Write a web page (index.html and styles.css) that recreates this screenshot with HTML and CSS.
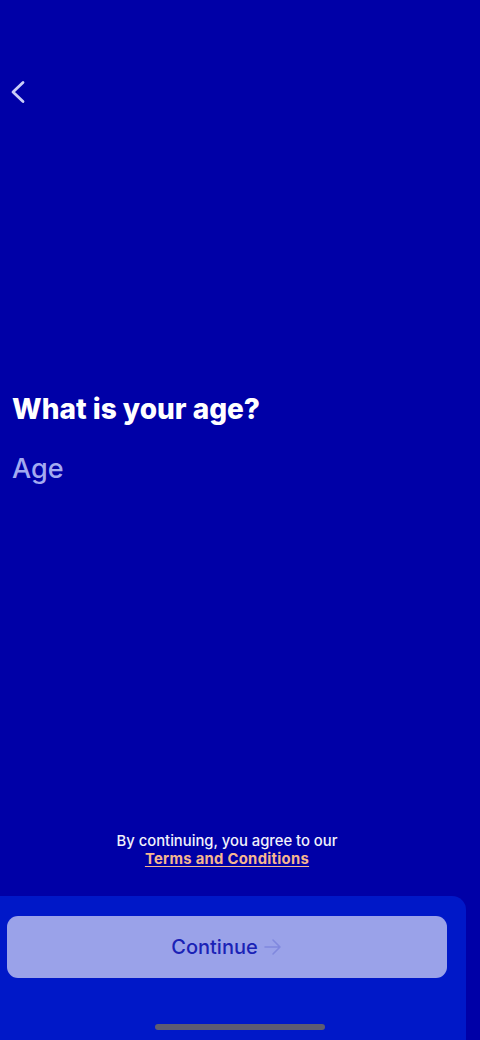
FILE: index.html
```html
<!DOCTYPE html>
<html lang="en">
<head>
<meta charset="utf-8">
<title>Age</title>
<link rel="stylesheet" href="styles.css">
</head>
<body>
<div class="screen">
  <div class="top">
    <button class="back" aria-label="Back">
      <svg width="18" height="24" viewBox="0 0 18 24"><path d="M14 2.5 L4 12 L14 21.5" fill="none" stroke="#c9cdf7" stroke-width="2.8" stroke-linecap="round" stroke-linejoin="round"/></svg>
    </button>
  </div>
  <div class="question">
    <h1 class="title">What is your age?</h1>
    <div class="placeholder">Age</div>
  </div>
  <div class="spacer"></div>
  <p class="terms">By continuing, you agree to our<br><a class="terms-link" href="#">Terms and Conditions</a></p>
  <div class="panel">
    <button class="continue">Continue <svg class="arrow" width="20" height="18" viewBox="0 0 20 18"><path d="M2 9 H17 M10 2 L17 9 L10 16" fill="none" stroke="#8088de" stroke-width="1.6" stroke-linecap="round" stroke-linejoin="round"/></svg></button>
  </div>
  <div class="home-indicator"></div>
</div>
</body>
</html>
```
FILE: styles.css
```css
* { box-sizing: border-box; }
html, body { margin: 0; padding: 0; }
body {
  background: #0000a7;
  font-family: Inter, "Noto Sans", sans-serif;
  color: #fff;
}
.screen {
  position: relative;
  width: 480px;
  height: 1040px;
  display: flex;
  flex-direction: column;
  overflow: hidden;
}
.top {
  padding: 80px 0 0 9px;
}
.back {
  background: none;
  border: 0;
  padding: 0;
  display: block;
  width: 18px;
  height: 24px;
}
.question {
  margin-top: 288px;
  padding-left: 12px;
}
.title {
  margin: 0;
  font-size: 28px;
  font-weight: 800;
  line-height: 34px;
  letter-spacing: 0;
}
.placeholder {
  margin-top: 26px;
  font-size: 27px;
  font-weight: 500;
  line-height: 34px;
  color: #a3aaf0;
}
.spacer { flex: 1; }
.terms {
  margin: 0 0 28px;
  width: 454px;
  text-align: center;
  font-size: 14.8px;
  line-height: 18px;
  font-weight: 500;
  color: #f2f2fb;
}
.terms-link {
  color: #f6b78f;
  font-weight: 700;
  letter-spacing: 0.3px;
  text-decoration: underline;
  text-underline-offset: 2px;
}
.panel {
  width: 466px;
  height: 144px;
  background: #0018c8;
  border-top-right-radius: 14px;
  padding: 20px 19px 0 7px;
}
.continue {
  width: 440px;
  height: 62px;
  border: 0;
  border-radius: 11px;
  background: #9aa2e9;
  color: #1a22b6;
  font-family: Inter, "Noto Sans", sans-serif;
  font-size: 20px;
  font-weight: 500;
  display: flex;
  align-items: center;
  justify-content: center;
  gap: 5px;
}
.arrow { display: block; }
.home-indicator {
  position: absolute;
  left: 155px;
  bottom: 10px;
  width: 170px;
  height: 6px;
  border-radius: 3px;
  background: #5d5c72;
}
```
